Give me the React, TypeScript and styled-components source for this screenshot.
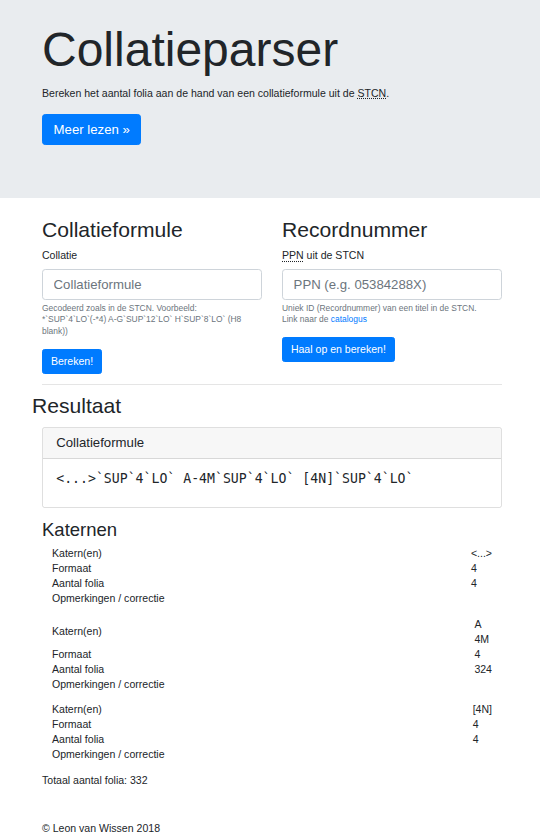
import React from 'react';
import styled, {createGlobalStyle} from 'styled-components';

const GlobalStyle = createGlobalStyle`
    html, body {
        margin: 0;
        padding: 0;
        background: #fff;
    }
    body {
        font-family: "Liberation Sans", Arial, sans-serif;
        font-size: 10.56px;
        line-height: 1.5;
        color: #212529;
    }
    * {
        box-sizing: border-box;
    }
`;

type Katern = {
    katern: string[];
    formaat: string;
    folia: string;
};

const katernen: Katern[] = [
    {katern: ['<...>'], formaat: '4', folia: '4'},
    {katern: ['A', '4M'], formaat: '4', folia: '324'},
    {katern: ['[4N]'], formaat: '4', folia: '4'},
];

export default function App() {
    return (
        <>
            <GlobalStyle />
            <StyledJumbotron>
                <StyledContainer>
                    <StyledDisplay>Collatieparser</StyledDisplay>
                    <StyledLead>
                        Bereken het aantal folia aan de hand van een collatieformule uit de <abbr title="Short Title Catalogue Netherlands">STCN</abbr>.
                    </StyledLead>
                    <StyledLargeButton type="button">Meer lezen &raquo;</StyledLargeButton>
                </StyledContainer>
            </StyledJumbotron>

            <StyledContainer>
                <StyledRow>
                    <StyledColumn>
                        <StyledH2>Collatieformule</StyledH2>
                        <StyledLabel>Collatie</StyledLabel>
                        <StyledInput type="text" placeholder="Collatieformule" />
                        <StyledHelp>
                            Gecodeerd zoals in de STCN. Voorbeeld:
                            <br />
                            *`SUP`4`LO`(-*4) A-G`SUP`12`LO` H`SUP`8`LO` (H8 blank))
                        </StyledHelp>
                        <StyledButton type="button">Bereken!</StyledButton>
                    </StyledColumn>
                    <StyledColumn>
                        <StyledH2>Recordnummer</StyledH2>
                        <StyledLabel>
                            <abbr title="Pica Productie Nummer">PPN</abbr> uit de STCN
                        </StyledLabel>
                        <StyledInput type="text" placeholder="PPN (e.g. 05384288X)" />
                        <StyledHelp>
                            Uniek ID (Recordnummer) van een titel in de STCN.
                            <br />
                            Link naar de <a href="#">catalogus</a>
                        </StyledHelp>
                        <StyledButton type="button">Haal op en bereken!</StyledButton>
                    </StyledColumn>
                </StyledRow>

                <StyledRule />

                <StyledResultTitle>Resultaat</StyledResultTitle>

                <StyledCard>
                    <StyledCardHeader>Collatieformule</StyledCardHeader>
                    <StyledCardBody>
                        <StyledFormula>{'<...>`SUP`4`LO` A-4M`SUP`4`LO` [4N]`SUP`4`LO`'}</StyledFormula>
                    </StyledCardBody>
                </StyledCard>

                <StyledH3>Katernen</StyledH3>
                {katernen.map((k, index) => (
                    <StyledKaternTable key={`katern-${index}`}>
                        <StyledCell>Katern(en)</StyledCell>
                        <StyledValue>
                            {k.katern.map((line) => (
                                <div key={line}>{line}</div>
                            ))}
                        </StyledValue>
                        <StyledCell>Formaat</StyledCell>
                        <StyledValue>{k.formaat}</StyledValue>
                        <StyledCell>Aantal folia</StyledCell>
                        <StyledValue>{k.folia}</StyledValue>
                        <StyledCell>Opmerkingen / correctie</StyledCell>
                        <StyledValue />
                    </StyledKaternTable>
                ))}
                <StyledTotal>Totaal aantal folia: 332</StyledTotal>

                <StyledFooter>&copy; Leon van Wissen 2018</StyledFooter>
            </StyledContainer>
        </>
    );
}

const StyledJumbotron = styled.div`
    background: #e9ecef;
    padding: 21px 0 43px;
    margin-bottom: 19px;
`;

const StyledContainer = styled.div`
    width: 460px;
    margin: 0 0 0 42px;
`;

const StyledDisplay = styled.h1`
    margin: 0 0 5.3px;
    font-size: 48px;
    font-weight: 300;
    line-height: 1.2;
    color: #212529;
`;

const StyledLead = styled.p`
    margin: 0 0 10.6px;
    font-size: 10.56px;
    line-height: 19.8px;

    abbr {
        text-decoration: underline dotted;
        cursor: help;
    }
`;

const StyledLargeButton = styled.button`
    display: block;
    height: 30.5px;
    margin-bottom: 10.6px;
    padding: 0 10.6px;
    border: 1px solid #007bff;
    border-radius: 3.3px;
    background: #007bff;
    color: #fff;
    font-family: inherit;
    font-size: 13.2px;
    line-height: 1;
    cursor: pointer;
`;

const StyledRow = styled.div`
    display: grid;
    grid-template-columns: 1fr 1fr;
    column-gap: 20px;
`;

const StyledColumn = styled.div`
    display: flex;
    flex-direction: column;
    align-items: flex-start;
`;

const StyledH2 = styled.h2`
    margin: 0 0 5.3px;
    font-size: 21.1px;
    font-weight: 500;
    line-height: 1.2;
`;

const StyledLabel = styled.label`
    display: block;
    margin: 0.5px 0 5px;
    line-height: 15.84px;

    abbr {
        text-decoration: underline dotted;
        cursor: help;
    }
`;

const StyledInput = styled.input`
    display: block;
    width: 100%;
    height: 30.5px;
    padding: 0 10.6px;
    border: 1px solid #ced4da;
    border-radius: 3.3px;
    background: #fff;
    font-family: inherit;
    font-size: 13.2px;
    color: #495057;

    &::placeholder {
        color: #6c757d;
    }
`;

const StyledHelp = styled.small`
    display: block;
    margin: 2.8px 0 11.4px;
    font-size: 8.45px;
    line-height: 11.7px;
    color: #6c757d;

    a {
        color: #007bff;
        text-decoration: none;
    }
`;

const StyledButton = styled.button`
    height: 24.7px;
    padding: 0 7.9px;
    border: 1px solid #007bff;
    border-radius: 2.6px;
    background: #007bff;
    color: #fff;
    font-family: inherit;
    font-size: 10.56px;
    line-height: 1;
    cursor: pointer;
`;

const StyledRule = styled.hr`
    margin: 10.6px 0 8px;
    border: 0;
    border-top: 1px solid rgba(0, 0, 0, 0.1);
`;

const StyledResultTitle = styled(StyledH2)`
    margin: 0 0 8px -10px;
`;

const StyledCard = styled.div`
    border: 1px solid rgba(0, 0, 0, 0.125);
    border-radius: 2.6px;
    overflow: hidden;
    margin-bottom: 10.5px;
`;

const StyledCardHeader = styled.h5`
    margin: 0;
    padding: 7.4px 13.2px;
    background: rgba(0, 0, 0, 0.03);
    border-bottom: 1px solid rgba(0, 0, 0, 0.125);
    font-size: 13.2px;
    font-weight: 500;
    line-height: 15.84px;
`;

const StyledCardBody = styled.div`
    padding: 12.5px 13.2px 12px;
`;

const StyledFormula = styled.pre`
    margin: 0 0 10.6px;
    font-family: "DejaVu Sans Mono", "Liberation Mono", monospace;
    font-size: 13.2px;
    line-height: 13px;
    color: #212529;
`;

const StyledH3 = styled.h3`
    margin: 0 0 5.3px;
    font-size: 18.5px;
    font-weight: 500;
    line-height: 1.2;
`;

const StyledKaternTable = styled.div`
    display: grid;
    grid-template-columns: 1fr auto;
    padding: 0 10px;
    margin-bottom: 10.5px;
    line-height: 15px;
`;

const StyledCell = styled.div`
    display: flex;
    align-items: center;
    min-height: 15px;
`;

const StyledValue = styled.div`
    display: flex;
    flex-direction: column;
    justify-content: center;
    min-height: 15px;
`;

const StyledTotal = styled.p`
    margin: 0;
    line-height: 15px;
`;

const StyledFooter = styled.footer`
    margin-top: 33px;
    padding-bottom: 6px;
    line-height: 15px;
`;
